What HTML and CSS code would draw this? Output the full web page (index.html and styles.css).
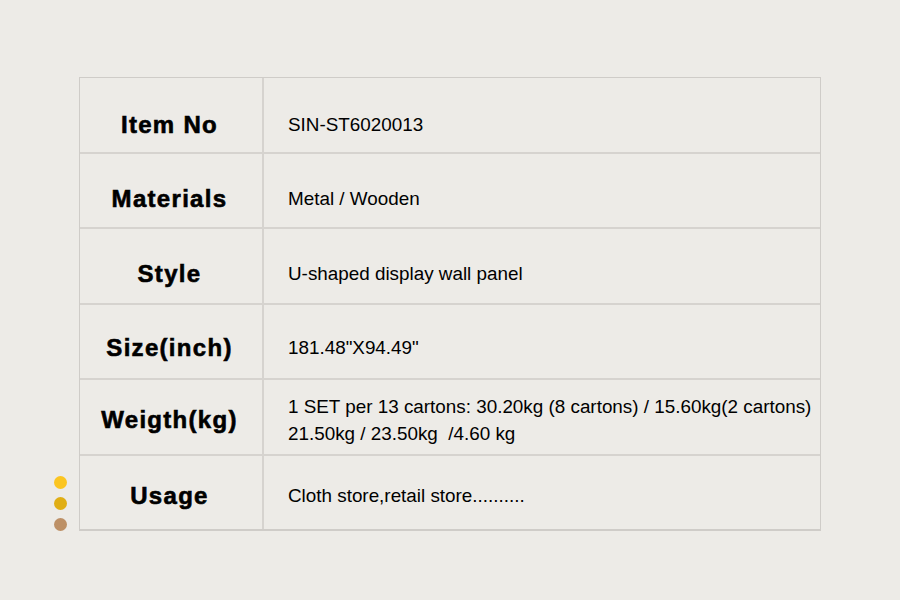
FILE: index.html
```html
<!DOCTYPE html>
<html lang="en">
<head>
<meta charset="utf-8">
<title>Product specification</title>
<link rel="stylesheet" href="styles.css">
</head>
<body>
<div class="page">
  <div class="dots">
    <span class="dot dot-yellow"></span>
    <span class="dot dot-gold"></span>
    <span class="dot dot-tan"></span>
  </div>
  <div class="spec">
    <div class="row">
      <div class="label">Item No</div>
      <div class="value">SIN-ST6020013</div>
    </div>
    <div class="row">
      <div class="label">Materials</div>
      <div class="value">Metal / Wooden</div>
    </div>
    <div class="row">
      <div class="label">Style</div>
      <div class="value">U-shaped display wall panel</div>
    </div>
    <div class="row">
      <div class="label">Size(inch)</div>
      <div class="value">181.48"X94.49"</div>
    </div>
    <div class="row">
      <div class="label">Weigth(kg)</div>
      <div class="value">1 SET per 13 cartons: 30.20kg (8 cartons) / 15.60kg(2 cartons)<br>21.50kg / 23.50kg&nbsp; /4.60 kg</div>
    </div>
    <div class="row">
      <div class="label">Usage</div>
      <div class="value">Cloth store,retail store..........</div>
    </div>
  </div>
</div>
</body>
</html>
```

FILE: styles.css
```css
html, body {
  margin: 0;
  padding: 0;
  background: #edebe7;
}

body {
  width: 900px;
  height: 600px;
  overflow: hidden;
  font-family: "Liberation Sans", Arial, sans-serif;
  color: #000;
}

.page {
  display: flex;
  align-items: stretch;
  gap: 12px;
  padding: 77px 0 0 54px;
}

.dots {
  display: flex;
  flex-direction: column;
  justify-content: flex-end;
  gap: 8px;
  width: 13px;
}

.dot {
  display: block;
  width: 13px;
  height: 13px;
  border-radius: 50%;
}

.dot-yellow { background: #fbc521; }
.dot-gold { background: #e0ae14; }
.dot-tan { background: #bd9066; }

.spec {
  width: 740px;
  border: 1px solid #cfccc8;
  border-bottom-width: 2px;
}

.row {
  display: grid;
  grid-template-columns: 184px 1fr;
  height: 73.5px;
  box-sizing: content-box;
}

.row + .row {
  border-top: 2px solid #d6d3cf;
}

.label,
.value {
  display: flex;
  align-items: center;
  box-sizing: border-box;
  line-height: 27.7px;
}

.label {
  justify-content: center;
  border-right: 2px solid #d6d3cf;
  padding-right: 3px;
  font-size: 24px;
  font-weight: bold;
  letter-spacing: 1.3px;
  -webkit-text-stroke: 0.6px #000;
}

.value {
  padding-left: 24px;
  font-size: 18.85px;
}

.row:nth-child(1) > div { padding-top: 20px; }
.row:nth-child(2) > div { padding-top: 18px; }
.row:nth-child(3) > div { padding-top: 16px; }
.row:nth-child(4) > div { padding-top: 13px; }
.row:nth-child(5) > div { padding-top: 7px; }
.row:nth-child(6) > div { padding-top: 7px; }
```
